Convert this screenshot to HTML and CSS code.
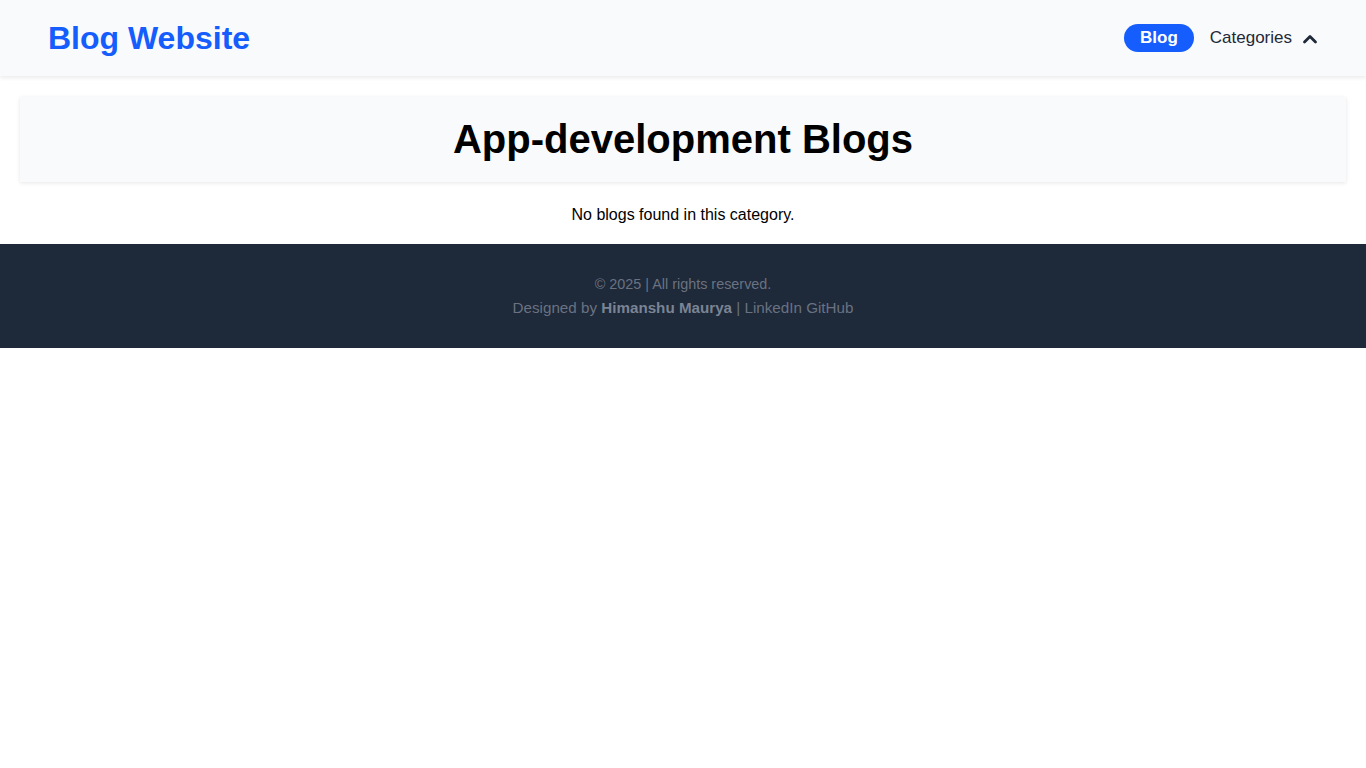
FILE: index.html
```html
<!DOCTYPE html>
<html lang="en">
<head>
<meta charset="utf-8">
<title>App-development Blogs</title>
<link rel="stylesheet" href="styles.css">
</head>
<body>
<header class="site-header">
  <a class="logo" href="#">Blog Website</a>
  <nav class="nav">
    <a class="nav-pill" href="#">Blog</a>
    <button class="nav-dropdown" type="button">
      <span>Categories</span>
      <svg class="chevron" width="16" height="16" viewBox="0 0 16 16" aria-hidden="true">
        <path d="M2.5 11 L8 5.5 L13.5 11" fill="none" stroke="#1e2939" stroke-width="2.8" stroke-linecap="round" stroke-linejoin="round"/>
      </svg>
    </button>
  </nav>
</header>
<main class="main">
  <section class="title-card">
    <h1 class="page-title">App-development Blogs</h1>
  </section>
  <p class="empty">No blogs found in this category.</p>
</main>
<footer class="site-footer">
  <p class="footer-line">© 2025 | All rights reserved.</p>
  <p class="footer-line footer-credit">Designed by <strong class="author">Himanshu Maurya</strong> | <a class="footer-link" href="#">LinkedIn</a> <a class="footer-link" href="#">GitHub</a></p>
</footer>
</body>
</html>
```

FILE: styles.css
```css
* { box-sizing: border-box; }
html, body { margin: 0; padding: 0; }
body {
  font-family: "Liberation Sans", Arial, sans-serif;
  color: #000;
  background: #fff;
}
.site-header {
  height: 76px;
  background: #f9fafb;
  box-shadow: 0 2px 4px rgba(0,0,0,0.08);
  display: flex;
  align-items: center;
  justify-content: space-between;
  padding: 0 48px;
  position: relative;
  z-index: 1;
}
.logo {
  font-size: 32px;
  font-weight: 700;
  color: #155dfc;
  text-decoration: none;
  line-height: 1;
}
.nav {
  display: flex;
  align-items: center;
  gap: 16px;
}
.nav-pill {
  background: #155dfc;
  color: #fff;
  font-weight: 700;
  font-size: 17px;
  text-decoration: none;
  height: 28px;
  padding: 0 16px;
  border-radius: 14px;
  display: flex;
  align-items: center;
}
.nav-dropdown {
  border: 0;
  background: transparent;
  font-family: inherit;
  font-size: 17px;
  color: #1e2939;
  display: flex;
  align-items: center;
  gap: 10px;
  padding: 0;
  cursor: pointer;
}
.chevron { display: block; margin-top: 1px; }
.main { padding: 21px 20px 0; }
.title-card {
  background: #f9fafb;
  box-shadow: 0 1px 4px rgba(0,0,0,0.1);
  padding: 18px 0 19px;
  text-align: center;
}
.page-title {
  margin: 0;
  font-size: 40px;
  line-height: 48px;
  font-weight: 700;
}
.empty {
  margin: 21px 0 0;
  padding-bottom: 17px;
  text-align: center;
  font-size: 16px;
  line-height: 24px;
}
.site-footer {
  background: #1e2939;
  padding: 28px 0;
  text-align: center;
  color: #6a7282;
  font-size: 14.4px;
  line-height: 24px;
}
.footer-line { margin: 0; }
.footer-credit { font-size: 15.2px; }
.author { font-weight: 700; color: #7a8494; }
.footer-link { color: #6a7282; text-decoration: none; }
```
